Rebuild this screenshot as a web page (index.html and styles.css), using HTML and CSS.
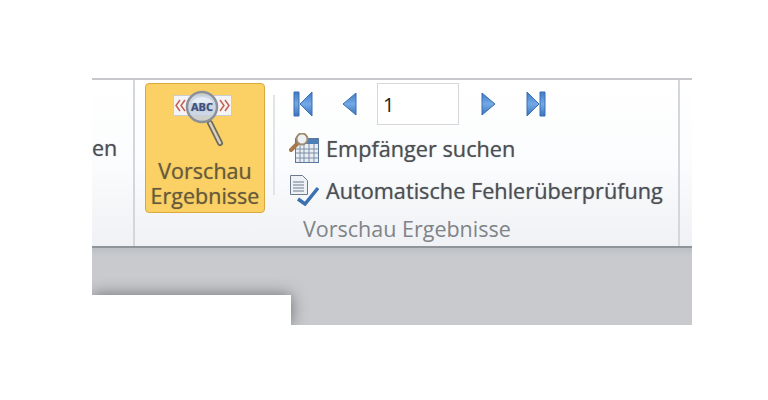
FILE: index.html
```html
<!DOCTYPE html>
<html lang="de">
<head>
    <meta charset="UTF-8">
    <meta name="viewport" content="width=device-width, initial-scale=1.0">
    <title>Vorschau Ergebnisse</title>
    <link rel="stylesheet" href="styles.css">
</head>
<body>
    <div class="window">
        <div class="ribbon">
            <div class="group group-cut">
                <span class="cut-text">en</span>
            </div>
            <div class="group group-preview">
                <div class="group-body">
                    <button class="big-button">
                        <svg class="big-icon" width="70" height="60" viewBox="0 0 70 60">
                            <rect x="3.500" y="7.500" width="58" height="20" fill="#f4f4f6" stroke="#c9ccd2"/>
                            <path d="M10 12l-4 5.500 4 5.500M15 12l-4 5.500 4 5.500M55 12l4 5.500-4 5.500M50 12l4 5.500-4 5.500" fill="none" stroke="#c4604f" stroke-width="1.500"/>
                            <path d="M40 35l10 20" stroke="#6f6a5c" stroke-width="6" stroke-linecap="round"/>
                            <path d="M40 35l10 20" stroke="#d8d2bf" stroke-width="2.500" stroke-linecap="round"/>
                            <circle cx="32" cy="19" r="15" fill="#c3cfe2" fill-opacity=".8" stroke="#8b9099" stroke-width="2.500"/>
                            <path d="M21 15a12 10 0 0 1 22 0z" fill="#eef2f8" fill-opacity=".8"/>
                            <text x="32" y="23" class="abc">ABC</text>
                        </svg>
                        <span>Vorschau<br>Ergebnisse</span>
                    </button>
                    <div class="divider"></div>
                    <div class="tools">
                        <div class="nav-row">
                            <svg class="nav-icon" width="20" height="26" viewBox="0 0 20 26">
                                <defs>
                                    <linearGradient id="navBlue" x1="0" y1="0" x2="0" y2="1">
                                        <stop offset="0" stop-color="#3f7bc6"/>
                                        <stop offset=".5" stop-color="#74a9e6"/>
                                        <stop offset="1" stop-color="#3a74bd"/>
                                    </linearGradient>
                                </defs>
                                <path d="M1 1h5v24H1zM19 1v24L7 13z" fill="url(#navBlue)" stroke="#3a6fb0"/>
                            </svg>
                            <svg class="nav-icon nav-prev" width="15" height="26" viewBox="0 0 15 26"><path d="M14 2v22L1 13z" fill="url(#navBlue)" stroke="#3a6fb0"/></svg>
                            <input class="page-input" type="text" value="1">
                            <svg class="nav-icon nav-next" width="15" height="26" viewBox="0 0 15 26"><path d="M1 2v22l13-11z" fill="url(#navBlue)" stroke="#3a6fb0"/></svg>
                            <svg class="nav-icon nav-last" width="20" height="26" viewBox="0 0 20 26"><path d="M1 1v24l12-12zM14 1h5v24h-5z" fill="url(#navBlue)" stroke="#3a6fb0"/></svg>
                        </div>
                        <div class="tool-row">
                            <svg width="30" height="30" viewBox="0 0 30 30">
                                <rect x="6.500" y="5.500" width="23" height="24" fill="#e9eef5" stroke="#5d7898"/>
                                <rect x="7" y="6" width="22" height="5" fill="#4d80b8"/>
                                <path d="M11 11v18M15 11v18M20 11v18M25 11v18M7 16h22M7 20h22M7 25h22" stroke="#7d8fa5"/>
                                <path d="M8 11l-6 6" stroke="#a5784a" stroke-width="4" stroke-linecap="round"/>
                                <circle cx="13" cy="6" r="5.500" fill="#eef1f4" stroke="#a08a70" stroke-width="2"/>
                            </svg>
                            <span>Empfänger suchen</span>
                        </div>
                        <div class="tool-row">
                            <svg width="30" height="32" viewBox="0 0 30 32">
                                <path d="M1.500 1.500h12l5 5v14h-17z" fill="#eef1f6" stroke="#6d7a8c"/>
                                <path d="M4 8h11M4 11h11M4 14h11M4 17h11" stroke="#6d7a8c"/>
                                <path d="M9 25l7 5L29 14" fill="none" stroke="#3d70b0" stroke-width="3.500"/>
                            </svg>
                            <span>Automatische Fehlerüberprüfung</span>
                        </div>
                    </div>
                </div>
                <div class="group-label">Vorschau Ergebnisse</div>
            </div>
        </div>
        <div class="workspace">
            <div class="sheet"></div>
        </div>
    </div>
</body>
</html>
```

FILE: styles.css
```css
body {
    margin: 0;
    height: 400px;
    background-color: #fff;
    font-family: "Open Sans", Arial, sans-serif;
    overflow: hidden;
}

.window {
    width: 600px;
    height: 247px;
    margin: 78px 0 0 92px;
    display: flex;
    flex-direction: column;
}

.ribbon {
    height: 170px;
    flex: none;
    box-sizing: border-box;
    display: flex;
    border-top: 2px solid #c6c8cb;
    border-bottom: 2px solid #8f949b;
    background: linear-gradient(#fff, #fbfcfd 50%, #eff1f4);
}

.group {
    box-sizing: border-box;
    border-right: 2px solid #d3d6da;
}

.group-cut {
    width: 43px;
    padding: 56px 16px 0 0;
    text-align: right;
}

.cut-text {
    font-size: 21.5px;
    line-height: 24px;
    color: #4c4f54;
    text-shadow: 0 0 1px rgba(68, 71, 76, .6);
}

.group-preview {
    width: 545px;
    display: flex;
    flex-direction: column;
}

.group-body {
    flex: 1;
    display: flex;
    padding: 3px 0 0 10px;
}

.big-button {
    width: 120px;
    height: 130px;
    padding: 4px 0 0;
    box-sizing: border-box;
    display: flex;
    flex-direction: column;
    align-items: center;
    border: 1px solid #d9a93f;
    border-radius: 4px;
    background-color: #fbd166;
    font-family: inherit;
    font-size: 21.5px;
    line-height: 25px;
    color: #665a3c;
    text-shadow: 0 0 1px rgba(94, 81, 51, .6);
}

.big-icon {
    margin-bottom: 10px;
}

.abc {
    font-size: 11px;
    font-weight: 700;
    text-anchor: middle;
    fill: #3d4f86;
}

.divider {
    width: 2px;
    height: 100px;
    margin: 12px 0 0 8px;
    background-color: #e2e4e7;
}

.tools {
    margin-left: 14px;
}

.nav-row {
    height: 42px;
    display: flex;
    align-items: center;
    padding-left: 4px;
}

.nav-prev {
    margin-left: 29px;
}

.page-input {
    width: 82px;
    height: 42px;
    box-sizing: border-box;
    margin-left: 20px;
    padding: 0 0 0 5px;
    border: 1px solid #d5d7da;
    background-color: #fff;
    font-family: inherit;
    font-size: 20px;
    color: #222;
}

.nav-next {
    margin-left: 22px;
}

.nav-last {
    margin-left: 30px;
}

.tool-row {
    height: 42px;
    display: flex;
    align-items: center;
    gap: 7px;
    font-size: 21.7px;
    color: #4c4f54;
    text-shadow: 0 0 1px rgba(68, 71, 76, .6);
    white-space: nowrap;
}

.tool-row:nth-child(2) {
    margin-top: 2px;
}

.group-label {
    height: 32px;
    padding-left: 168px;
    font-size: 21.5px;
    line-height: 30px;
    color: #7f8388;
}

.workspace {
    flex: 1;
    padding-top: 47px;
    background: linear-gradient(#bcc0c5, #c8cace 8px);
    overflow: hidden;
}

.sheet {
    width: 199px;
    height: 30px;
    background-color: #fff;
    box-shadow: 0 0 16px rgba(60, 60, 65, .65);
}
```
